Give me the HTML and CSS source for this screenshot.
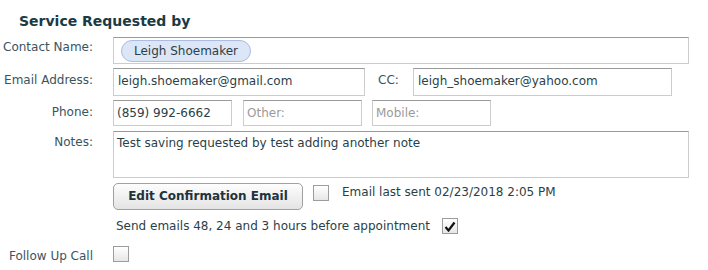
FILE: index.html
```html
<!DOCTYPE html>
<html>
<head>
<meta charset="utf-8">
<link rel="stylesheet" href="styles.css">
</head>
<body>
<div class="panel">
  <h2 class="title">Service Requested by</h2>
  <div class="form">
    <label class="lbl lbl-contact">Contact Name:</label>
    <div class="field token-field"><span class="token">Leigh Shoemaker</span></div>

    <label class="lbl lbl-email">Email Address:</label>
    <div class="row email-row">
      <div class="field email">leigh.shoemaker@gmail.com</div>
      <span class="cc-lbl">CC:</span>
      <div class="field cc">leigh_shoemaker@yahoo.com</div>
    </div>

    <label class="lbl lbl-phone">Phone:</label>
    <div class="row phone-row">
      <div class="field phone">(859) 992-6662</div>
      <div class="field phone ph">Other:</div>
      <div class="field phone ph mobile">Mobile:</div>
    </div>

    <label class="lbl lbl-notes">Notes:</label>
    <div class="field notes">Test saving requested by test adding another note</div>

    <span></span>
    <div class="row btn-row">
      <button class="btn">Edit Confirmation Email</button>
      <span class="cb"></span>
      <span class="sent">Email last sent 02/23/2018 2:05 PM</span>
    </div>

    <span></span>
    <div class="row send-row">
      <span class="send">Send emails 48, 24 and 3 hours before appointment</span>
      <span class="cb checked"><svg width="12" height="11" viewBox="0 0 12 11"><path d="M1.5 6 L4.5 9.5 L10.5 1.5" fill="none" stroke="#111" stroke-width="2.2"/></svg></span>
    </div>

    <label class="lbl lbl-follow">Follow Up Call</label>
    <div class="row follow-row"><span class="cb"></span></div>
  </div>
</div>
</body>
</html>
```

FILE: styles.css
```css
html, body {
  margin: 0;
  padding: 0;
  background: #ffffff;
}
body {
  font-family: "DejaVu Sans", Verdana, sans-serif;
  font-size: 12px;
  color: #2a3f48;
}
.panel {
  width: 708px;
  height: 270px;
}
.title {
  margin: 0;
  padding: 14px 0 0 19px;
  height: 29px;
  box-sizing: border-box;
  font-size: 14px;
  line-height: 15px;
  font-weight: bold;
  color: #1b3a44;
}
.form {
  display: grid;
  grid-template-columns: 93px 576px;
  column-gap: 20px;
  margin-top: 8px;
  align-items: start;
}
.lbl {
  text-align: right;
  color: #3a545e;
  white-space: nowrap;
  line-height: 14px;
}
.lbl-contact { padding-top: 3px; }
.lbl-email { padding-top: 5px; margin-top: 4px; }
.lbl-phone { padding-top: 5px; margin-top: 4px; }
.lbl-notes { padding-top: 4px; margin-top: 5px; }
.lbl-follow { padding-top: 2px; margin-top: 13px; }

.field {
  box-sizing: border-box;
  border: 1px solid #cccccc;
  border-top-color: #9a9a9a;
  background: #fff;
  padding: 0 4px;
  line-height: 14px;
  color: #2a3f48;
  white-space: nowrap;
  overflow: hidden;
}
.token-field {
  height: 27px;
  padding: 2px 7px;
}
.token {
  display: inline-block;
  height: 22px;
  box-sizing: border-box;
  line-height: 20px;
  padding: 0 12px 0 12px;
  border: 1px solid #a9bde0;
  border-radius: 11px;
  background: #dde6f6;
  color: #2a3f48;
}
.row {
  display: flex;
  align-items: center;
}
.email-row { margin-top: 4px; }
.email {
  width: 252px;
  height: 28px;
  padding-top: 5px;
}
.cc-lbl {
  margin-left: 13px;
  width: 35px;
  align-self: flex-start;
  padding-top: 5px;
  color: #3a545e;
}
.cc {
  width: 259px;
  height: 28px;
  padding-top: 5px;
}
.phone-row { margin-top: 4px; gap: 11px; }
.phone {
  width: 119px;
  height: 26px;
  padding-top: 5px;
  padding-left: 3px;
}
.ph { color: #9a9a9a; }
.mobile { margin-left: -1px; }
.notes {
  margin-top: 5px;
  height: 47px;
  padding: 4px 3px;
  white-space: normal;
}
.btn-row { margin-top: 5px; }
.btn {
  box-sizing: border-box;
  width: 190px;
  height: 27px;
  border: 1px solid #a0a0a0;
  border-radius: 5px;
  background: linear-gradient(#fdfdfd, #e4e4e4);
  font-family: "DejaVu Sans", Verdana, sans-serif;
  font-size: 12px;
  font-weight: bold;
  color: #1e333c;
  padding: 0 0 2px 0;
}
.cb {
  display: inline-flex;
  align-items: center;
  justify-content: center;
  box-sizing: border-box;
  width: 16px;
  height: 16px;
  border: 1px solid #9c9c9c;
  background: linear-gradient(#ffffff, #e6e6e6);
}
.btn-row .cb { margin-left: 10px; margin-top: -7px; }
.sent {
  margin-left: 13px;
  margin-top: -9px;
  color: #2a3f48;
}
.send-row { margin-top: 8px; }
.send {
  margin-left: 3px;
  color: #2a3f48;
}
.send-row .cb { margin-left: 12px; }
.follow-row { margin-top: 12px; }
```
